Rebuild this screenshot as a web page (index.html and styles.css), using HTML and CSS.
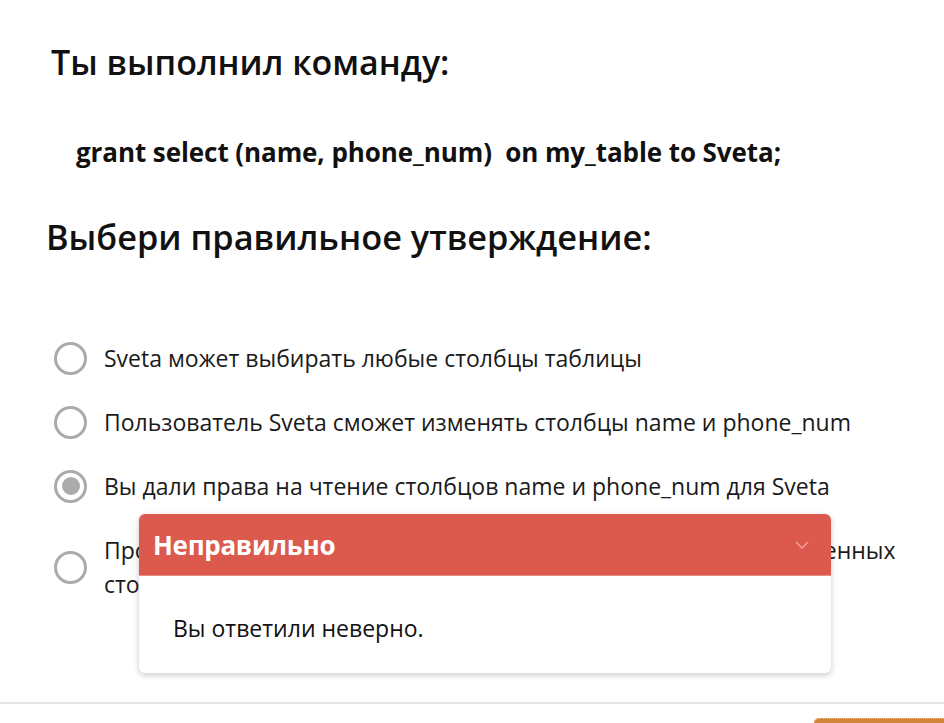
FILE: index.html
```html
<!DOCTYPE html>
<html lang="ru">
<head>
<meta charset="utf-8">
<link rel="stylesheet" href="styles.css">
</head>
<body>
<div class="page">
  <main class="content">
    <h2 class="title">Ты выполнил команду:</h2>
    <p class="command">grant select (name, phone_num)&nbsp; on my_table to Sveta;</p>
    <h2 class="question">Выбери правильное утверждение:</h2>
    <ul class="options">
      <li class="option"><span class="radio"></span><span class="label">Sveta может выбирать любые столбцы таблицы</span></li>
      <li class="option"><span class="radio"></span><span class="label">Пользователь Sveta сможет изменять столбцы name и phone_num</span></li>
      <li class="option"><span class="radio checked"></span><span class="label">Вы дали права на чтение столбцов name и phone_num для Sveta</span></li>
      <li class="option"><span class="radio"></span><span class="label">Произойдёт ошибка: нельзя выдавать права на часть перечисленных столбцов</span></li>
    </ul>
    <div class="feedback">
      <div class="feedback-head">
        <span class="feedback-title">Неправильно</span>
        <svg class="chevron" width="14" height="8" viewBox="0 0 14 8"><path d="M1 1 L7 7 L13 1" fill="none" stroke="#f0a79f" stroke-width="1.3"/></svg>
      </div>
      <div class="feedback-body">Вы ответили неверно.</div>
    </div>
  </main>
  <footer class="footer">
    <span class="next-btn"></span>
  </footer>
</div>
</body>
</html>
```
FILE: styles.css
```css
html, body {
  margin: 0;
  padding: 0;
  background: #fff;
}
body {
  font-family: "Open Sans", "Noto Sans", sans-serif;
  color: #111;
  width: 944px;
  height: 723px;
  overflow: hidden;
}
.page {
  display: flex;
  flex-direction: column;
}
.content {
  position: relative;
  height: 702px;
  padding: 0 0 0 46px;
  box-sizing: border-box;
}
.title {
  margin: 0;
  padding: 39px 0 0 5px;
  font-size: 34px;
  font-weight: 600;
  line-height: 46px;
}
.command {
  margin: 0;
  padding: 50px 0 0 30px;
  font-size: 26px;
  font-weight: 700;
  line-height: 34px;
  letter-spacing: -0.08px;
}
.question {
  margin: 0;
  padding: 45px 0 0 0;
  font-size: 34.3px;
  font-weight: 600;
  line-height: 46px;
}
.options {
  list-style: none;
  margin: 0;
  padding: 81px 0 0 8px;
  display: flex;
  flex-direction: column;
  gap: 30px;
}
.option {
  display: flex;
  align-items: center;
  gap: 17px;
  font-size: 23px;
  line-height: 34px;
  color: #1a1a1a;
  max-width: 850px;
}
.radio {
  flex: none;
  width: 33px;
  height: 33px;
  border: 3px solid #ababab;
  border-radius: 50%;
  box-sizing: border-box;
  display: flex;
  align-items: center;
  justify-content: center;
}
.radio.checked::after {
  content: "";
  width: 18px;
  height: 18px;
  border-radius: 50%;
  background: #ababab;
}
.feedback {
  position: absolute;
  left: 139px;
  top: 514px;
  width: 692px;
  height: 159px;
  background: #fff;
  border-radius: 6px;
  box-shadow: 0 2px 6px rgba(0,0,0,0.22);
  overflow: hidden;
}
.feedback-head {
  height: 62px;
  background: #dc5a4d;
  display: flex;
  align-items: center;
  justify-content: space-between;
  padding: 0 22px 0 14px;
  border-bottom: 1px solid #e98f85;
  box-sizing: border-box;
}
.feedback-title {
  color: #fff;
  font-size: 26px;
  font-weight: 700;
  letter-spacing: -0.3px;
}
.feedback-body {
  padding: 37px 0 0 34px;
  font-size: 23px;
  line-height: 30px;
  color: #111;
}
.footer {
  height: 21px;
  border-top: 2px solid #e6e6e6;
  display: flex;
  justify-content: flex-end;
  align-items: flex-end;
}
.next-btn {
  width: 130px;
  height: 7px;
  background: #cf843a;
  border-radius: 5px 0 0 0;
  border-top: 1px dotted #f0c080;
  box-sizing: border-box;
}
```
